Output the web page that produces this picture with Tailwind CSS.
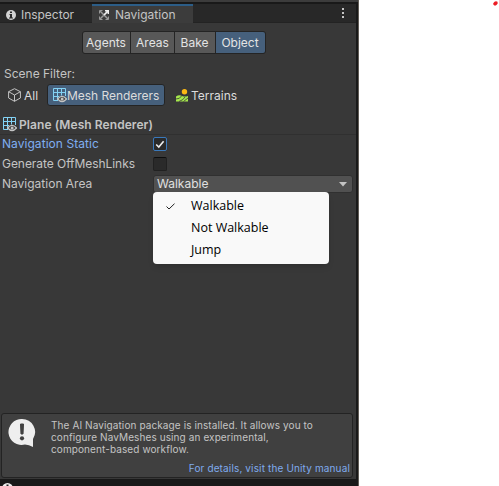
<!DOCTYPE html>
<html lang="en">
<head>
<meta charset="utf-8">
<title>Navigation</title>
<script src="https://cdn.jsdelivr.net/npm/@tailwindcss/browser@4"></script>
</head>
<body class="relative h-[486px] w-[499px] overflow-hidden bg-white font-['Inter',sans-serif] text-[12px] text-[#c4c4c4]">
<svg width="0" height="0" class="absolute">
  <symbol id="mesh" viewBox="0 0 14 15">
    <path d="M.5 .5H12.500V8M.5 .5V12.500H5M4.500 .5V12.500M8.500 .5V7.500M.5 4.500H12.500M.5 8.500H6" fill="none" stroke="#83d2f5"/>
    <path d="M4.700 11Q9 5.800 13.500 11Q9 16 4.700 11Z" fill="#383838" stroke="#c4c4c4" stroke-width="1.300"/>
    <circle cx="9.100" cy="11" r="1.500" fill="#c4c4c4"/>
  </symbol>
</svg>
<main class="flex h-[486px] w-[359px] flex-col border-r border-[#625d57] bg-[#191919]">
  <div class="h-[2px] bg-[#3c3c3c]"></div>
  <div class="mt-[2px] flex h-[475px] w-[356px] flex-col bg-[#383838]">
    <nav class="flex h-[19px] shrink-0 border-b border-[#232323] bg-[#282828]">
      <div class="flex h-[19px] w-[92px] items-center pl-[6px] pt-[2px]">
        <svg width="10" height="10" viewBox="0 0 10 10" class="mr-[5px] shrink-0"><circle cx="5" cy="5" r="5" fill="#d2d2d2"/><path d="M4 1.500H6V3H4ZM3.500 4H6V7.500H7V8.500H3V7.500H4V5H3.500Z" fill="#282828"/></svg>
        <span class="whitespace-nowrap leading-4 tracking-[-.03px]">Inspector</span>
      </div>
      <div class="flex h-[19px] w-[101px] items-center border-t-2 border-[#2c5d87] bg-[#3c3c3c] pl-[7px]">
        <svg width="10" height="10" viewBox="0 0 10 10" class="mr-[6px] shrink-0" fill="none"><path d="M1 1L9 9M1 9L9 1" stroke="#999" stroke-width="1.500"/><path d="M.5 3.500V.5H3.500M.5 6.500V9.500H3.500M6.500 9.500H9.500V6.500" stroke="#999"/><path d="M5 5L8.500 1.500M6 .7H9.300V4" stroke="#eee" stroke-width="1.500"/></svg>
        <span class="whitespace-nowrap leading-4">Navigation</span>
      </div>
      <div class="ml-auto mr-[12px] flex flex-col gap-[2px] pt-[4px]"><i class="size-[2px] bg-[#c4c4c4]"></i><i class="size-[2px] bg-[#c4c4c4]"></i><i class="size-[2px] bg-[#c4c4c4]"></i></div>
    </nav>
    <div class="ml-[82px] mt-[8px] flex h-[23px] w-[184px] shrink-0 gap-px overflow-hidden rounded-[3px] border border-[#242424] bg-[#242424] text-center leading-[21px] text-[#e4e4e4]">
      <div class="w-[47px] bg-[#585858] pr-[1px]">Agents</div>
      <div class="w-[43px] bg-[#585858]">Areas</div>
      <div class="w-[40px] bg-[#585858] pr-[1px]">Bake</div>
      <div class="flex-1 bg-[#46607c] pr-[1px]">Object</div>
    </div>
    <div class="mt-[12px] h-4 shrink-0 pl-[4px] leading-4">Scene Filter:</div>
    <div class="mt-[2px] flex h-[22px] shrink-0 items-center text-[#dcdcdc]">
      <div class="flex w-[47px] items-center pl-[8px]">
        <svg width="13" height="14" viewBox="0 0 13 14" class="mr-[3px] shrink-0" fill="none" stroke="#c4c4c4"><path d="M6.500 .7L12.400 3.700V10L6.500 13.300L.6 10V3.700ZM.6 3.700L6.500 7L12.400 3.700M6.500 7V13.300"/></svg>
        <span class="pt-px">All</span>
      </div>
      <div class="flex h-[22px] w-[118px] items-center rounded-[3px] border border-[#242424] bg-[#46607c] pl-[5px]">
        <svg width="14" height="15" class="shrink-0"><use href="#mesh"/></svg>
        <span class="whitespace-nowrap pt-px tracking-[-.04px]">Mesh Renderers</span>
      </div>
      <div class="flex items-center pl-[11px]">
        <svg width="12" height="13" viewBox="0 0 12 13" class="mr-[3px] shrink-0"><circle cx="8.500" cy="2.700" r="2.700" fill="#fdb913"/><path d="M0 7.500Q3 5.500 6 7Q9 8 12 7V12.500H0Z" fill="#a6e84c"/><path d="M0 10Q4 10 5.500 7M3 12.500Q7.500 11 9 8M7.500 12.500L12 9" fill="none" stroke="#383838" stroke-width=".8"/></svg>
        <span class="pt-px">Terrains</span>
      </div>
    </div>
    <div class="mt-[8px] flex h-[21px] shrink-0 items-center border-b border-[#303030] pl-[3px] font-semibold">
      <svg width="14" height="15" class="mr-[2px] shrink-0"><use href="#mesh"/></svg>
      <span class="pt-px tracking-[.07px]">Plane (Mesh Renderer)</span>
    </div>
    <div class="flex h-[18px] shrink-0 items-center pl-[2px]">
      <span class="w-[151px] text-[#7faef0] tracking-[.05px]">Navigation Static</span>
      <span class="flex size-[14px] items-center justify-center rounded-[2px] border border-[#3a79bb] bg-[#2a2a2a]"><svg width="10" height="9" viewBox="0 0 10 9" fill="none"><path d="M1.200 4.500L3.800 7L8.600 1.300" stroke="#eee" stroke-width="1.600"/></svg></span>
    </div>
    <div class="mt-px flex h-5 shrink-0 items-center pl-[2px]">
      <span class="w-[151px] tracking-[-.05px]">Generate OffMeshLinks</span>
      <span class="size-[14px] rounded-[2px] border border-[#212121] border-t-[#0d0d0d] bg-[#2a2a2a]"></span>
    </div>
    <div class="relative flex h-5 shrink-0 items-center pl-[2px]">
      <span class="w-[151px]">Navigation Area</span>
      <div class="flex h-[18px] w-[200px] items-center justify-between rounded-[3px] border border-[#303030] bg-[#515151] pl-[3px] pr-[5px] text-[#e0e0e0]"><span class="-mt-px">Walkable</span><svg width="8" height="5" viewBox="0 0 8 5"><path d="M0 0H8L4 4.500Z" fill="#c4c4c4"/></svg></div>
      <div class="absolute left-[153px] top-[18px] z-10 flex h-[72px] w-[176px] flex-col rounded-[4px] bg-[#f9f9f9] pt-[3px] font-['Open_Sans',sans-serif] text-[12.500px] leading-[22px] text-black shadow-md">
        <div class="flex items-center"><svg width="9" height="7" viewBox="0 0 9 7" class="ml-[13px] mr-[16px]" fill="none"><path d="M.5 3.500L3 6L8.500 .7" stroke="#222"/></svg>Walkable</div>
        <div class="pl-[38px]">Not Walkable</div>
        <div class="pl-[38px]">Jump</div>
      </div>
    </div>
    <div class="mb-px ml-px mt-auto flex h-[65px] w-[352px] shrink-0 rounded-[3px] border border-[#232323] bg-[#404040] text-[10px] leading-[12px] tracking-[.1px]">
      <svg width="28" height="30" viewBox="0 0 28 30" class="ml-[6px] mt-[4px] shrink-0"><path d="M14 1A13 13 0 1 0 17 26.500Q21 26.500 25 29V21A13 13 0 0 0 14 1Z" fill="#eee"/><path d="M12.500 6H15.500L15 16H13Z" fill="#404040" stroke="#404040" stroke-linejoin="round"/><circle cx="14" cy="20.300" r="2.100" fill="#404040"/></svg>
      <div class="flex flex-1 flex-col pl-[15px] pt-[5px]">
        <p class="whitespace-nowrap">The AI Navigation package is installed. It allows you to<br>configure NavMeshes using an experimental,<br>component-based workflow.</p>
        <p class="mr-[2px] mt-[7px] whitespace-nowrap text-right text-[#7fabee] tracking-[.14px]">For details, visit the Unity manual</p>
      </div>
    </div>
  </div>
  <div class="flex h-[7px] overflow-hidden pl-[2px] pt-[4px]"><svg width="11" height="11" viewBox="0 0 11 11" class="shrink-0"><circle cx="5.500" cy="5.500" r="5.500" fill="#eee"/><path d="M4.500 1.500H6.500V7H4.500Z" fill="#222"/></svg></div>
</main>
<svg class="absolute left-[493px] top-px" width="5" height="5" viewBox="0 0 5 5"><path d="M1.500 .7Q3 -.2 4.500 .7L4.700 2.500Q3.500 5 1.500 4.600Q-.5 3.500 .5 2Z" fill="#ec1c24"/></svg>
</body>
</html>
